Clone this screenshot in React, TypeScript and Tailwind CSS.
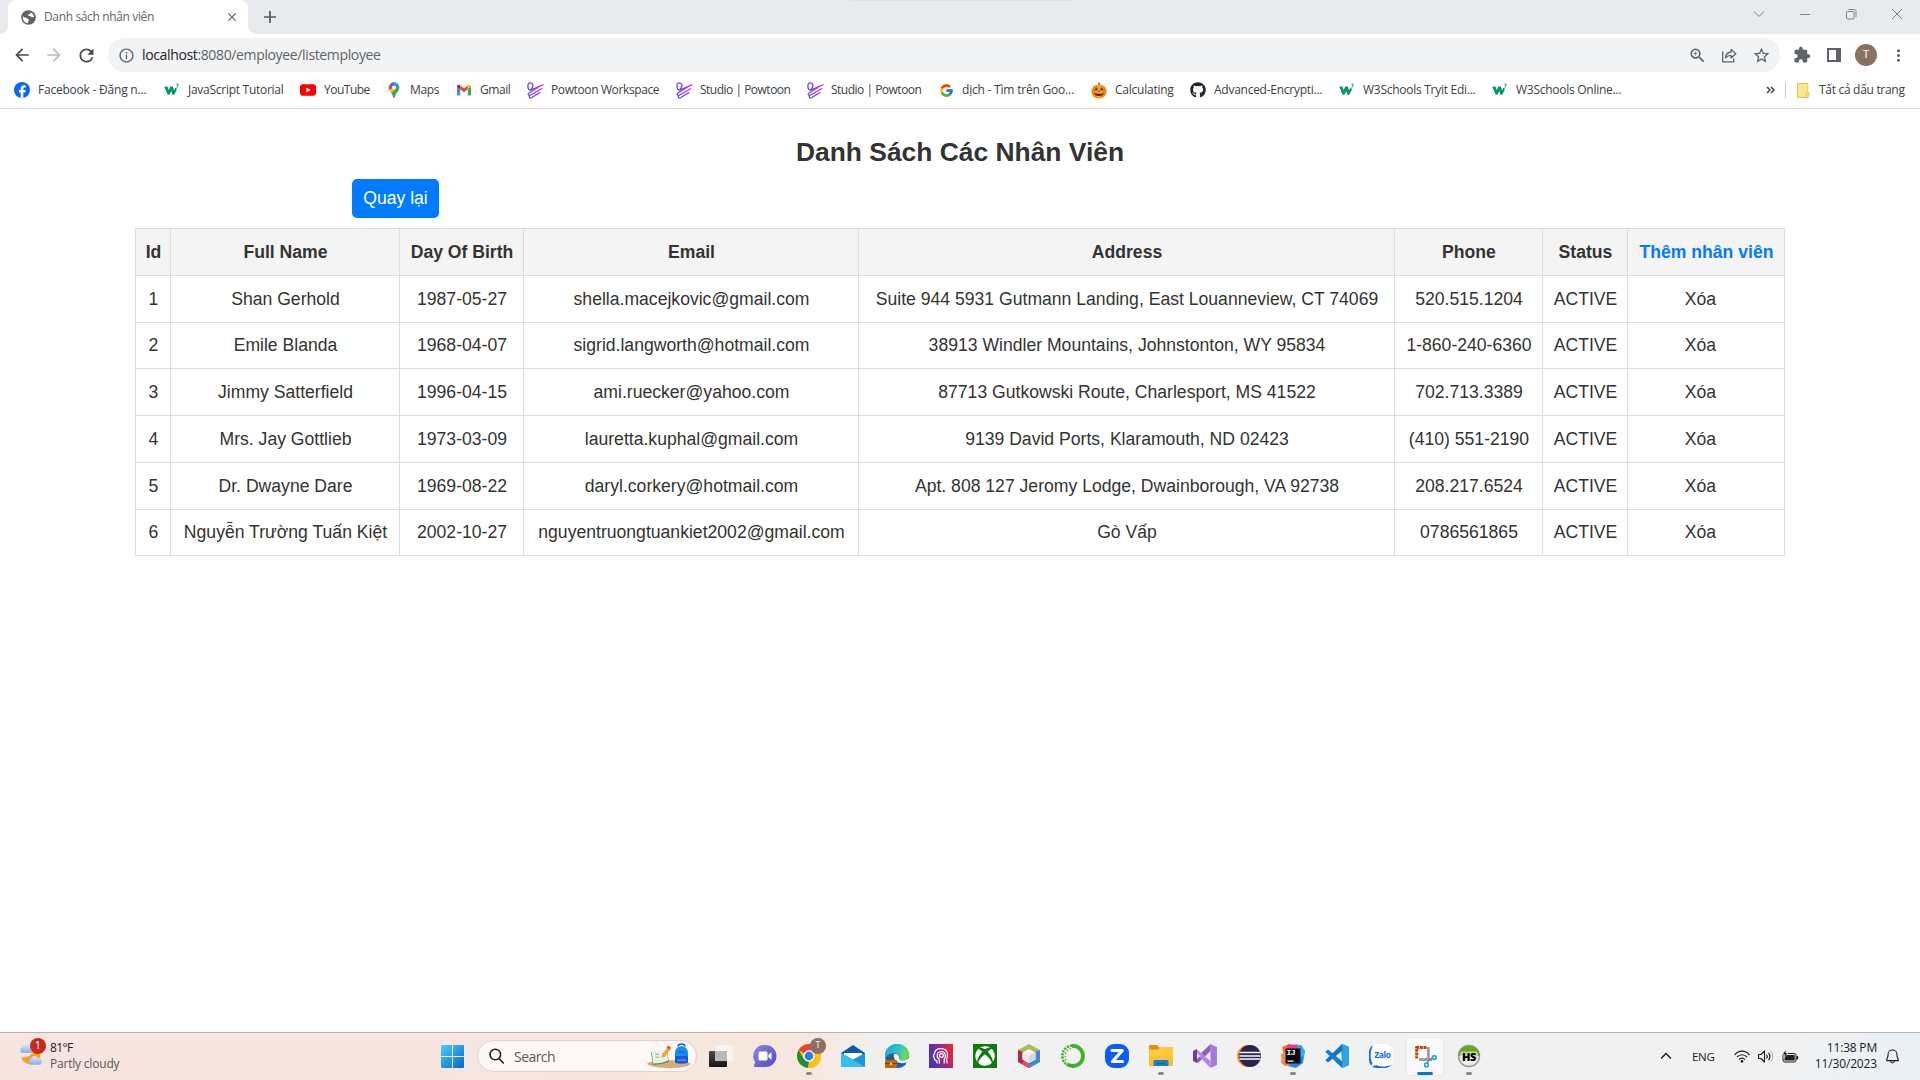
import React from "react";
import { MdArrowBack, MdArrowForward, MdRefresh, MdInfoOutline, MdZoomIn, MdStarBorder, MdExtension, MdMoreVert, MdClose, MdAdd } from "react-icons/md";
import { FaGithub, FaXbox } from "react-icons/fa";
import { FcGoogle } from "react-icons/fc";

const UI = "font-['Open_Sans','Noto_Sans',sans-serif]";

/* ---------- bookmark icons ---------- */
const Facebook = () => (
  <svg width="16" height="16" viewBox="0 0 16 16">
    <circle cx="8" cy="8" r="8" fill="#0866ff" />
    <path d="M6.700 15.900v-5.400H5V8h1.700V6.900c0-2.500 1.100-3.700 3.600-3.700.5 0 1.200.1 1.500.2v2.200h-.8c-1.200 0-1.700.5-1.700 1.700V8h2.400l-.4 2.500H9.300v5.400z" fill="#fff" />
  </svg>
);
const W3 = () => (
  <svg width="17" height="16" viewBox="0 0 17 16">
    <path d="M.3 4.200h3.400L5 8.300l1.600-4.100h2.800l1.200 4L12 6l2 .6-3 6.400H9L7.700 9.300 5.800 13h-2z" fill="#059862" />
    <path d="M13.200 1.600h2l-1.200 1.500c1.700.1 1.400 2.200-.8 1.900" fill="none" stroke="#059862" strokeWidth=".9" />
  </svg>
);
const YouTube = () => (
  <svg width="16" height="16" viewBox="0 0 16 16">
    <rect x="0" y="2.300" width="16" height="11.400" rx="2.600" fill="#f00" />
    <path d="M6.400 5.600v4.800L10.600 8z" fill="#fff" />
  </svg>
);
const Maps = () => (
  <svg width="16" height="16" viewBox="0 0 16 16">
    <path d="M4.200 2.100 8 5.200 3.400 8.300A5.500 5.500 0 0 1 4.200 2.100z" fill="#ea4335" />
    <path d="M4.100 2.200A5.300 5.300 0 0 1 9.700.5L6 5z" fill="#1a73e8" />
    <path d="M9.600.4a5.400 5.400 0 0 1 3.200 2.700L9.900 6.700 6.300 4z" fill="#4285f4" />
    <path d="M12.700 2.900c1 2 .8 4-.3 5.700-1.500 2.200-3 3.500-3.400 6.400-.2 1-1.800 1-2 0-.3-1.800-.9-3-2-4.600z" fill="#34a853" />
    <path d="m3.200 8.200 6.500-2.300-4.300 5.700C4.700 10.600 3.900 9.500 3.200 8.200z" fill="#fbbc04" />
    <circle cx="8" cy="5.500" r="1.900" fill="#fff" />
  </svg>
);
const Gmail = () => (
  <svg width="16" height="16" viewBox="0 0 16 16">
    <path d="M1 4.500v8.100c0 .5.400.9.900.9h2.300V7z" fill="#4285f4" />
    <path d="M15 4.500v8.100c0 .5-.4.900-.9.900h-2.300V7z" fill="#34a853" />
    <path d="M4.200 3.500 8 6.500l3.800-3v3.700L8 10.200 4.200 7.200z" fill="#ea4335" />
    <path d="M1 4.300C1 2.800 2.500 2.300 3.500 3l.7.500v3.700L1 4.900z" fill="#c5221f" />
    <path d="M15 4.300c0-1.500-1.500-2-2.500-1.300l-.7.500v3.700L15 4.900z" fill="#fbbc04" />
  </svg>
);
const Powtoon = () => (
  <svg className="shrink-0" width="17" height="17" viewBox="0 0 17 17" fill="none" strokeWidth="1.300" strokeLinecap="round" strokeLinejoin="round">
    <defs>
      <linearGradient id="pow" gradientUnits="userSpaceOnUse" x1="1" y1="0" x2="16" y2="0">
        <stop offset="0" stopColor="#4a4dea" />
        <stop offset="1" stopColor="#d62be8" />
      </linearGradient>
    </defs>
    <path d="M16 2.800 4.200 7.800C2.200 8.600.8 7 .9 3.800.9.800 3 .2 4.900 1.500c1.600 1.100 1.600 3.200-.6 5.200" stroke="url(#pow)" />
    <path d="M14.800 6.800 3.200 13.200C1.600 14 .4 12 2 11L11 5.500" stroke="url(#pow)" />
    <path d="M12.800 10.600 4.500 15.800c-1.500.8-2.600-.5-2-1.800" stroke="url(#pow)" />
  </svg>
);
const Pumpkin = () => (
  <svg width="16" height="17" viewBox="0 0 16 17">
    <path d="M7 3.800 7.300.4l1.700.2-.3 3.300z" fill="#4f7f2a" />
    <ellipse cx="8" cy="9.500" rx="7.600" ry="7" fill="#f28412" />
    <ellipse cx="8" cy="9.500" rx="3.500" ry="7" fill="#fa9e25" />
    <path d="m3.500 8.300 2-3 1.500 3zM9 8.300l1.500-3 2 3zM7 10l1-1.200L9 10zM3 11l1.800.8 1-.6 1.200 1 1-.8 1 .8 1.200-1 1 .6L13 11c-.8 4-9.200 4-10 0z" fill="#53260c" />
  </svg>
);
const GoogleIcon = () => <FcGoogle size={15} />;
const Octocat = () => <FaGithub size={16} color="#24292f" />;

const bookmarks = [
  { Icon: Facebook, label: "Facebook - Đăng n...", w: "w-[150px]", t: "tracking-[-0.22px]" },
  { Icon: W3, label: "JavaScript Tutorial", w: "w-[136px]", t: "tracking-[-0.27px]" },
  { Icon: YouTube, label: "YouTube", w: "w-[86px]", t: "tracking-[-0.5px]" },
  { Icon: Maps, label: "Maps", w: "w-[70px]", t: "tracking-[-0.34px]" },
  { Icon: Gmail, label: "Gmail", w: "w-[71px]", t: "tracking-[-0.44px]" },
  { Icon: Powtoon, label: "Powtoon Workspace", w: "w-[149px]", t: "tracking-[-0.38px]" },
  { Icon: Powtoon, label: "Studio | Powtoon", w: "w-[131px]", t: "tracking-[-0.5px]" },
  { Icon: Powtoon, label: "Studio | Powtoon", w: "w-[131px]", t: "tracking-[-0.5px]" },
  { Icon: GoogleIcon, label: "dịch - Tìm trên Goo...", w: "w-[153px]", t: "tracking-[-0.21px]" },
  { Icon: Pumpkin, label: "Calculating", w: "w-[99px]", t: "tracking-[-0.24px]" },
  { Icon: Octocat, label: "Advanced-Encrypti...", w: "w-[149px]", t: "tracking-[-0.26px]" },
  { Icon: W3, label: "W3Schools Tryit Edi...", w: "w-[153px]", t: "tracking-[-0.27px]" },
  { Icon: W3, label: "W3Schools Online...", w: "w-[140px]", t: "tracking-[-0.27px]" },
];

/* ---------- browser chrome ---------- */
const Globe = () => (
  <svg className="shrink-0" width="15" height="15" viewBox="0 0 15 15">
    <circle cx="7.500" cy="7.500" r="7.300" fill="#5f6368" />
    <path d="M2 6.200c1.200 1.200 2.200 1.500 3.400 1.600 1 .2.800 1.200 1.800 1.500.9.200 1 1 .4 1.700-.5.600-.4 1.600-1.100 2.200C3.400 12.700 1.300 9.500 2 6.200zM9.500 2.300c.3 1.300-.5 1.800-1.500 2-.9.200-.6 1.200-1.500 1.500 1 .2 2.500 0 3.300.8.800.9 1.800.7 3.200.5-.2-2-1.500-4-3.500-4.800z" fill="#fff" />
  </svg>
);

function TabStrip() {
  return (
    <div className="relative flex h-[34px] bg-[#e8eaed]">
      <div className="absolute left-[850px] top-0 h-px w-[222px] rounded-b bg-[#dfe1e6]" />
      <div className="flex w-2 items-end bg-white"><div className="h-full w-2 rounded-br-lg bg-[#e8eaed]" /></div>
      <div className="flex w-[240px] items-center bg-[#e8eaed]">
        <div className="flex h-full w-full items-center rounded-t-lg bg-white pl-[13px] pr-[9px]">
          <Globe />
          <span className="ml-[8px] grow whitespace-nowrap text-[12px] tracking-[-0.36px] text-[#5f6368]">Danh sách nhân viên</span>
          <MdClose size={14} color="#5f6368" />
        </div>
      </div>
      <div className="w-2 bg-white"><div className="h-full w-2 rounded-bl-lg bg-[#e8eaed]" /></div>
      <div className="flex w-[28px] items-center justify-center"><svg width="12" height="12" viewBox="0 0 12 12"><path d="M6 0v12M0 6h12" stroke="#53565a" strokeWidth="1.700" /></svg></div>
      <div className="grow" />
      <div className="flex h-[28px] w-[184px] text-[#808184]">
        <svg className="h-7 w-[46px]" viewBox="0 0 46 28" fill="none" stroke="currentColor"><path d="m18 11.500 5 5 5-5" /></svg>
        <svg className="h-7 w-[46px]" viewBox="0 0 46 28" fill="none" stroke="currentColor"><path d="M18 14.500h10" /></svg>
        <svg className="h-7 w-[46px]" viewBox="0 0 46 28" fill="none" stroke="currentColor"><rect x="18.500" y="11.500" width="7.500" height="7.500" rx="1" /><path d="M20.500 9.500H26c1.200 0 2 .8 2 2V17" /></svg>
        <svg className="h-7 w-[46px]" viewBox="0 0 46 28" fill="none" stroke="currentColor"><path d="m18 9 10 10M28 9 18 19" /></svg>
      </div>
    </div>
  );
}

function Toolbar() {
  return (
    <div className="flex h-[42px] items-center pl-[12px] text-[#5f6368]">
      <MdArrowBack size={20} color="#46494d" />
      <MdArrowForward size={20} className="ml-[12px]" color="#b9bbbd" />
      <MdRefresh size={21} className="ml-[12px]" color="#46494d" />
      <div className="ml-[11px] flex h-[34px] w-[1672px] items-center rounded-full bg-[#f1f3f4] pl-[10px] pr-[9px]">
        <MdInfoOutline size={17} />
        <span className="mb-px ml-[7px] grow whitespace-nowrap text-[14px] tracking-[-0.36px] text-[#5f6368]"><span className="text-[#202124]">localhost</span>:8080/employee/listemployee</span>
        <MdZoomIn size={19} />
        <svg className="ml-[14px]" width="17" height="17" viewBox="0 0 17 17" fill="none" stroke="currentColor" strokeWidth="1.300">
          <path d="M1.700 4.500v10.300h11v-3.300" />
          <path d="M4.500 10.800c.4-3.600 2.300-5.500 5.600-5.800V2.400l4.700 4.400-4.700 4.300V8.400c-2.500 0-4.300.8-5.600 2.400z" strokeLinejoin="round" />
        </svg>
        <MdStarBorder size={19} className="ml-[14px]" />
      </div>
      <MdExtension size={18} className="ml-[13px]" />
      <svg className="ml-[16px]" width="14" height="14" viewBox="0 0 14 14"><path fillRule="evenodd" d="M0 0h14v14H0zM2 2v10h7V2z" fill="#5f6368" /></svg>
      <div className="ml-[14px] flex h-[22px] w-[22px] items-center justify-center rounded-full bg-[#8d6e63] font-['Roboto',sans-serif] text-[11px] text-white">T</div>
      <MdMoreVert size={19} className="ml-[12px]" />
    </div>
  );
}

function Bookmarks() {
  return (
    <div className="flex h-[33px] items-start border-b border-[#d5d7da] pl-[14px] text-[12px] text-[#3c4043]">
      {bookmarks.map(({ Icon, label, w, t }, i) => (
        <div key={i} className={`flex h-[28px] shrink-0 items-center ${w}`}>
          <span className="flex w-4 shrink-0 justify-center"><Icon /></span>
          <span className={`ml-2 whitespace-nowrap ${t}`}>{label}</span>
        </div>
      ))}
      <div className="grow" />
      <div className="flex h-[28px] w-[154px] shrink-0 items-center">
        <svg width="10" height="8" viewBox="0 0 10 8" fill="none" stroke="#46494d" strokeWidth="1.500"><path d="m1 1 3 3-3 3M5 1l3 3-3 3" /></svg>
        <div className="ml-[9px] h-4 w-px bg-[#c8cacd]" />
        <svg className="ml-[11px]" width="13" height="15" viewBox="0 0 13 15"><path d="M.5.5h10.300v9l1.200.3v3.700l-1 1H.5z" fill="#ffe694" stroke="#e8c34a" /><path d="M9.500 14v-3.500h1.300" fill="none" stroke="#e8c34a" /></svg>
        <span className="ml-[9px] whitespace-nowrap tracking-[-0.3px]">Tất cả dấu trang</span>
      </div>
    </div>
  );
}

/* ---------- page ---------- */
const rows = [
  ["1", "Shan Gerhold", "1987-05-27", "shella.macejkovic@gmail.com", "Suite 944 5931 Gutmann Landing, East Louanneview, CT 74069", "520.515.1204", "ACTIVE", "Xóa"],
  ["2", "Emile Blanda", "1968-04-07", "sigrid.langworth@hotmail.com", "38913 Windler Mountains, Johnstonton, WY 95834", "1-860-240-6360", "ACTIVE", "Xóa"],
  ["3", "Jimmy Satterfield", "1996-04-15", "ami.ruecker@yahoo.com", "87713 Gutkowski Route, Charlesport, MS 41522", "702.713.3389", "ACTIVE", "Xóa"],
  ["4", "Mrs. Jay Gottlieb", "1973-03-09", "lauretta.kuphal@gmail.com", "9139 David Ports, Klaramouth, ND 02423", "(410) 551-2190", "ACTIVE", "Xóa"],
  ["5", "Dr. Dwayne Dare", "1969-08-22", "daryl.corkery@hotmail.com", "Apt. 808 127 Jeromy Lodge, Dwainborough, VA 92738", "208.217.6524", "ACTIVE", "Xóa"],
  ["6", "Nguyễn Trường Tuấn Kiệt", "2002-10-27", "nguyentruongtuankiet2002@gmail.com", "Gò Vấp", "0786561865", "ACTIVE", "Xóa"],
];
const heads = ["Id", "Full Name", "Day Of Birth", "Email", "Address", "Phone", "Status", "Thêm nhân viên"];
const cols = ["w-[35px]", "w-[229px]", "w-[124px]", "w-[335px]", "w-[536px]", "w-[148px]", "w-[85px]", "w-[157px]"];
const heights = ["h-[47px]", "h-[46px]", "h-[47px]", "h-[47px]", "h-[47px]", "h-[46px]"];

function EmployeePage() {
  return (
    <main className="h-[923px] overflow-hidden bg-white font-['Liberation_Sans',Arial,sans-serif] text-[#333]">
      <h2 className="mt-[27px] text-center text-[26.4px] font-bold leading-[32px]">Danh Sách Các Nhân Viên</h2>
      <div className="ml-[352px] mt-[11px] flex h-[39px] w-[87px] items-center justify-center rounded-[5px] bg-[#007bff] pb-px text-[17.6px] text-white">Quay lại</div>
      <table className="ml-[135px] mt-[10px] w-[1650px] table-fixed border-collapse text-center text-[17.6px] leading-6">
        <colgroup>{cols.map((c, i) => <col key={i} className={c} />)}</colgroup>
        <thead>
          <tr className="h-[47px] bg-[#f4f4f4]">
            {heads.map((h, i) => (
              <th key={h} className={`whitespace-nowrap border border-[#ddd] py-0 pl-px pr-0 font-bold ${i === 7 ? "text-[#007bff]" : ""}`}>{h}</th>
            ))}
          </tr>
        </thead>
        <tbody>
          {rows.map((r, ri) => (
            <tr key={r[0]} className={heights[ri]}>
              {r.map((c, i) => (
                <td key={i} className={`whitespace-nowrap border border-[#ddd] pl-px pt-0 ${i === 7 ? "pr-[12px]" : "pr-0"} ${ri === 1 || ri === 5 ? "pb-[2px]" : "pb-0"}`}>{c}</td>
              ))}
            </tr>
          ))}
        </tbody>
      </table>
    </main>
  );
}

/* ---------- taskbar icons ---------- */
type P = { children: React.ReactNode };
const S = ({ children }: P) => <svg width="24" height="24" viewBox="0 0 24 24">{children}</svg>;

const TaskView = () => (
  <S>
    <defs><linearGradient id="tv" x1="0" y1="0" x2="0" y2="1"><stop stopColor="#4a4a4a" /><stop offset="1" stopColor="#161616" /></linearGradient></defs>
    <rect x="0" y="7" width="18" height="16" rx="1" fill="url(#tv)" />
    <rect x="6" y="1" width="18" height="16" rx="1" fill="#f7f7f7" opacity=".88" />
    <rect x="6" y="7" width="12" height="10" fill="#b9b9b9" />
  </S>
);
const Chat = () => (
  <S>
    <defs><linearGradient id="ch" x1="0" y1="0" x2="1" y2="1"><stop stopColor="#8f86dd" /><stop offset="1" stopColor="#4a4cc0" /></linearGradient></defs>
    <path d="M12.500 1A11 11 0 0 1 12.500 23H2.500C1 23 .8 22 1.100 21l1-3A11 11 0 0 1 12.500 1z" fill="url(#ch)" />
    <rect x="5.500" y="7.500" width="9" height="9" rx="1.500" fill="#fff" /><path d="m15.300 11 3.200-2.700v7.500L15.300 13z" fill="#fff" />
  </S>
);
const Chrome = () => (
  <div className="relative h-6 w-6">
    <S>
      <circle cx="12" cy="12" r="12" fill="#fbc116" />
      <path d="M12 12 1.600 6A12 12 0 0 1 22.400 6z" fill="#ea4335" />
      <path d="M1.600 6 6.800 15 12 18v0l-1.300 5.900A12 12 0 0 1 1.600 6z" fill="#1e8e3e" />
      <path d="M12 6.500h10.700A12 12 0 0 1 11 24l5-9z" fill="#fbc116" />
      <circle cx="12" cy="12" r="5.700" fill="#fff" /><circle cx="12" cy="12" r="4.400" fill="#2f7ded" />
    </S>
    <div className="absolute -top-[6px] left-[13px] flex h-4 w-4 items-center justify-center rounded-full bg-[#8d6e63] font-['Roboto'] text-[9px] text-[#eee]">T</div>
  </div>
);
const Mail = () => (
  <S>
    <path d="M0 9 12 1l12 8v5H0z" fill="#0a5ba8" /><path d="M3 9h18v8H3z" fill="#fff" />
    <path d="M0 9v14h24V9l-12 6.500z" fill="#1c93dc" /><path d="M0 9v14h24z" fill="#35bdf2" />
  </S>
);
const Edge = () => (
  <S>
    <defs>
      <linearGradient id="e1" x1="0" y1="0" x2="1" y2=".4"><stop stopColor="#1b9de2" /><stop offset=".6" stopColor="#2fc7c8" /><stop offset="1" stopColor="#6edb4b" /></linearGradient>
    </defs>
    <circle cx="12" cy="12" r="12" fill="#0f62b5" />
    <path d="M0 11C1 4 6 0 12 0c7 0 12 5 12 10.500 0 4-3.300 6-6.500 6-3 0-4.200-1.200-3.500-2.300 1.500-2.200 0-5.200-3.500-5.200C6 9 1.500 11 0 15z" fill="url(#e1)" />
    <path d="M9 10c3-1 6 1.500 5 4.200-.7 1.100.5 2.300 3.500 2.300 2 0 4-.6 6.500-2.500V18l-2 2c-4-1-10-.500-12.500-4C8.500 14 8 11.500 9 10z" fill="#f1f1f1" />
    <path d="M9 10c-1 2-.5 4.500 1 6.500 2.500 3.500 7.500 4 12 1.800C19 24 13 24.500 8 22l-2-8z" fill="#0f62b5" />
    <rect x="4" y="14" width="5" height="3" fill="none" stroke="#7a3f08" /><rect x="0" y="16" width="12" height="8" rx="1" fill="#b66a12" /><path d="M0 19h12v1H0z" fill="#7a3f08" /><rect x="5" y="18.500" width="2" height="2.500" fill="#ffd257" />
  </S>
);
const HeadApp = () => (
  <S>
    <defs><linearGradient id="ha" x1="0" y1=".6" x2="1" y2=".3"><stop stopColor="#3b35c4" /><stop offset=".5" stopColor="#8a2a86" /><stop offset="1" stopColor="#f2242d" /></linearGradient></defs>
    <rect width="24" height="24" fill="url(#ha)" />
    <g fill="none" stroke="#fff" strokeWidth="1.200" strokeLinejoin="round">
      <path d="M8 19.500v-2.700C5.500 16.500 5 15 5.200 13L4.200 12.300 5.500 9.500C6.300 3 17.700 3 18.500 10c.2 3-.5 4.500-1 5.500l.7 4" />
      <path d="M10.300 19.500v-4.300C7.500 14 7 8 12 7.500c4.500 0 5.500 5 3.200 7.500v4.500" />
      <circle cx="12.400" cy="11.500" r="1.900" />
    </g>
  </S>
);
const Xbox = () => (
  <div className="flex h-6 w-6 items-center justify-center bg-[#107c10]"><FaXbox size={20} color="#fff" /></div>
);
const NetBeans = () => (
  <S>
    <path d="M12 0 23 6v12l-11 6L1 18V6z" fill="#a6bf57" />
    <path d="M1 6v12l11 6v-5l-6-4V8z" fill="#ae2b4d" /><path d="M5 20.200 12 24v-5l-5-3z" fill="#dd4f70" /><path d="M23 6v12l-11 6v-5l6-4V8z" fill="#4388cb" />
    <path d="m12 5 6.500 3.500v7L12 19l-6.500-3.500v-7z" fill="#f4f4f4" /><path d="M12 12v7l6.500-3.500v-7z" fill="#d5d7d9" /><path d="M5.500 8.500 12 12v7l-6.500-3.500z" fill="#e8e9ea" />
  </S>
);
const Anaconda = () => (
  <S>
    <path d="M11 2A10 10 0 1 1 6 20" fill="none" stroke="#43b02a" strokeWidth="3.800" />
    <path d="M11 1.500A10.500 10.500 0 0 0 5 20" fill="none" stroke="#43b02a" strokeWidth="2.600" strokeDasharray="2.200 1" />
    <path d="M10 4.500A8 8 0 0 0 6 17.500" fill="none" stroke="#43b02a" strokeWidth="1.300" strokeDasharray="1.500 1.800" />
  </S>
);
const ZApp = () => (
  <S>
    <rect width="24" height="24" rx="9" fill="#0b5cff" />
    <path d="M7 6.500h10.300L7.500 17.500H17.500" fill="none" stroke="#fff" strokeWidth="3.200" strokeLinejoin="round" strokeLinecap="round" />
  </S>
);
const Explorer = () => (
  <S>
    <path d="M0 2.500C0 1.700.7 1 1.500 1H8l2.500 2.500H24V9H0z" fill="#d99408" />
    <path d="M0 5.500h8.500L11 3.500h13V22H0z" fill="#fdcb3c" /><path d="M0 12h24v10H0z" fill="#f8bd2a" opacity=".6" />
    <path d="M4.500 22v-4.500c0-1 .8-1.500 1.500-1.500h12c1 0 1.500.7 1.500 1.500V22z" fill="#1583d0" /><path d="M8 19h8v1.300H8z" fill="#0b5a9e" />
  </S>
);
const VisualStudio = () => (
  <S>
    <path d="M17.500 0 24 3v18l-6.500 3z" fill="#a879d8" /><path d="M17.500 0v7L5 19l-4.500-2.500z" fill="#865fc5" /><path d="M17.500 24v-7L4 5.500.5 7z" fill="#b78ae0" />
    <path d="m0 7 4-2v14l-4-2z" fill="#68409c" /><path d="m4 9 3 3-3 3z" fill="#efefef" />
  </S>
);
const Eclipse = () => (
  <S>
    <circle cx="11" cy="12" r="11" fill="#f7941e" /><circle cx="13" cy="12" r="11" fill="#2c2255" />
    <path d="M2.500 8.500h21M2.500 12h21M2.500 15h21" stroke="#fff" strokeWidth="1.400" />
  </S>
);
const IntelliJ = () => (
  <div className="relative h-6 w-6">
    <S>
      <path d="M1 3 8 0l6 3-4 18-6 1-4-4 3-6z" fill="#fb6b35" /><path d="m8 0 6 2 6-1 4 6-2 12-7 5-8-2z" fill="#1e88f7" />
      <path d="M7 1 16 .5 22 9l-5 2L4 9z" fill="#fb2f86" /><path d="m0 10 6-2 2 14-7-2z" fill="#fc8a35" /><path d="m16 0 7 6v7l-6-2z" fill="#26b5ed" /><rect x="4.500" y="4.500" width="15" height="15" fill="#090909" /><path d="M6.500 16.500h6v1.200h-6z" fill="#fff" />
    </S>
    <span className="absolute left-[5.500px] top-[4px] font-['Liberation_Mono',monospace] text-[8px] font-bold leading-[9px] tracking-[-0.6px] text-white">IJ</span>
  </div>
);
const VSCode = () => (
  <S>
    <path d="M17.500 0 24 2.800v18.400L17.500 24 16 6z" fill="#2da3e8" />
    <path d="M17.500 0v6.500L3 18.500.3 16.200 16.500.6z" fill="#1176bd" /><path d="M17.500 24v-6.500L3 5.500.3 7.800l16.200 15.600z" fill="#0f80cc" />
  </S>
);
const Zalo = () => (
  <div className="relative flex h-6 w-6 items-center justify-center overflow-hidden rounded-[8px] bg-white">
    <svg className="absolute inset-0" width="24" height="24" viewBox="0 0 24 24"><path d="M4 1.500C1 7 1 15 3.500 19.500L2 22c2 .3 4-.3 5-1 5 2.500 11 2 16-.5-1 2-3 3.500-6 3.500H6c-4 0-6-2-6-6V6c0-2 1.500-4 4-4.500z" fill="#1468ee" /></svg>
    <span className="relative ml-[3px] mb-[2px] font-['Open_Sans'] text-[8.500px] font-bold leading-none tracking-[-0.4px] text-[#0a68ff]">Zalo</span>
  </div>
);
const Snip = () => (
  <S>
    <path d="M0 3h16v16H0z" fill="#fff" />
    <path d="M15.300 3v11.500M6 15.500h13" fill="none" stroke="#9a9fa3" strokeWidth="2.800" />
    <path d="M13.500 3.500H3.700v11" fill="none" stroke="#d4380d" strokeWidth="3" strokeDasharray="3 .7" />
    <path d="m14 19 2-3 3.500-2" stroke="#7d8388" fill="none" strokeWidth="1.600" />
    <circle cx="21.300" cy="13.600" r="1.900" fill="#fff" stroke="#169ddb" strokeWidth="1.500" /><circle cx="13.500" cy="20.900" r="1.900" fill="#fff" stroke="#169ddb" strokeWidth="1.500" />
  </S>
);
const HeidiSql = () => (
  <div className="relative flex h-6 w-6 items-center justify-center">
    <svg className="absolute inset-0" width="24" height="24" viewBox="0 0 24 24"><circle cx="12" cy="12" r="10.500" fill="#ececec" stroke="#9a9a9a" strokeWidth="1.500" /><path d="M1.500 12a10.500 10.500 0 0 1 21 0z" fill="#64a81d" /><rect x="3" y="7.500" width="18" height="9" rx="3" fill="#dfe6d6" opacity=".75" /></svg>
    <span className="relative font-['Open_Sans'] text-[11px] font-extrabold leading-none tracking-[-0.3px] text-black">HS</span>
  </div>
);

const apps = [
  { I: TaskView }, { I: Chat }, { I: Chrome, run: true }, { I: Mail }, { I: Edge }, { I: HeadApp }, { I: Xbox }, { I: NetBeans }, { I: Anaconda }, { I: ZApp },
  { I: Explorer, run: true }, { I: VisualStudio }, { I: Eclipse }, { I: IntelliJ, run: true }, { I: VSCode }, { I: Zalo }, { I: Snip, active: true }, { I: HeidiSql, run: true },
] as { I: React.FC; run?: boolean; active?: boolean }[];

function Taskbar() {
  return (
    <footer className="flex h-[48px] items-center border-t border-[#b9b4b3] bg-[linear-gradient(90deg,#f6e4e0_0%,#f7e5e1_25%,#f6e6de_34%,#f5e8df_42%,#f1f0ef_46%,#f1f1f1_50%,#f1f1f1_92%,#e9f0f6_100%)] text-[12px]">
      <div className="relative ml-[18px] h-[34px] w-[32px] shrink-0">
        <svg className="absolute left-0 top-[2px]" width="27" height="27" viewBox="0 0 28 28">
          <defs><linearGradient id="cl" x1="0" y1="0" x2="0" y2="1"><stop stopColor="#dcebfc" /><stop offset="1" stopColor="#86aeea" /></linearGradient></defs>
          <path d="M3 16c8 1 13-3 14-11 5 3 8 8 5 13-4 7-15 7-19-2z" fill="#f5a11c" />
          <path d="M4 11.500a3.500 3.500 0 0 1 0-6A5 5 0 0 1 13 4c3 1 4 5 1 7.500z" fill="url(#cl)" />
          <path d="M13 23.500a3.300 3.300 0 0 1 0-6 4.500 4.500 0 0 1 8-1c4 0 5 5 2 7z" fill="url(#cl)" />
        </svg>
        <div className="absolute left-[12px] top-[-2px] flex h-4 w-4 items-center justify-center rounded-full bg-[#c42b1c] text-[11px] text-white">1</div>
      </div>
      <div className="mb-[1px] w-[380px] leading-4 text-[#202020]"><div className="tracking-[-0.6px]">81°F</div><div className="tracking-[-0.2px] text-[#5c5654]">Partly cloudy</div></div>
      <svg className="ml-[11px] shrink-0" width="23" height="23" viewBox="0 0 23 23">
        <defs><linearGradient id="win" x1="0" y1="0" x2="1" y2="1"><stop stopColor="#4ccdfb" /><stop offset="1" stopColor="#0268c8" /></linearGradient></defs>
        <path d="M0 1q0-1 1-1h10v11H0zM12 0h10q1 0 1 1v10H12zM0 12h11v11H1q-1 0-1-1zM12 12h11v10q0 1-1 1H12z" fill="url(#win)" />
      </svg>
      <div className="mb-px ml-[13px] flex h-[32px] w-[220px] shrink-0 items-center rounded-full border border-[#e3d0ca] bg-[#fdf7f5] pl-[11px] pr-[4px]">
        <svg width="15" height="16" viewBox="0 0 15 16" fill="none" stroke="#222" strokeWidth="1.600"><circle cx="6.300" cy="6.500" r="5.300" /><path d="m10 10.500 4.300 4.500" strokeLinecap="round" /></svg>
        <span className="ml-[10px] grow text-[14px] tracking-[-0.55px] text-[#5d5957]">Search</span>
        <svg width="45" height="26" viewBox="0 0 45 26">
          <path d="M0 21c3-5 39-5 44 0-4 5.500-38 5.500-44 0z" fill="#d9ab76" />
          <path d="m4 9 9 1 7-2 2 11-8 2-8 1z" fill="#459a4e" /><path d="m4.500 7.500 8.500 1 6.500-2 1.800 11-7.500 2.500-7.500.5z" fill="#e9f1ea" /><path d="m8 11 4 .5M8.500 14l4 .3M15 11l3-1M15.500 14l3-1" stroke="#91ad96" />
          <path d="m15 12 5-7 3 2-5 6.500-3.500 1z" fill="#f6a623" /><path d="m19.500 5 1.500-2.500 3 2L23 7z" fill="#f14b3b" />
          <path d="M31 3.500C31 0 38 0 38 3.500" fill="none" stroke="#1466c2" strokeWidth="1.500" /><path d="M28 10c0-9 13-9 13 0v9c0 2-13 2-13 0z" fill="#1390f2" /><path d="M28 13h13v6c0 2-13 2-13 0z" fill="#0b63d0" /><path d="M30 17h9" stroke="#a16cf2" strokeWidth="1.500" /><path d="M31.500 9h6" stroke="#0b4fa8" />
        </svg>
      </div>
      <div className="ml-[2px] flex h-full shrink-0">
        {apps.map(({ I, run, active }, i) => (
          <div key={i} className="relative flex h-full w-11 items-center justify-center">
            {active && <div className="absolute left-[3px] top-[4px] h-[39px] w-[38px] rounded border border-[#e8e8e8] bg-[#f9f9f9]" />}
            <div className="relative mb-px"><I /></div>
            {run && <div className="absolute left-[19px] top-[39px] h-[3px] w-[6px] rounded-full bg-[#8a8a8a]" />}
            {active && <div className="absolute left-[14px] top-[39px] h-[3px] w-4 rounded-full bg-[#0078d4]" />}
          </div>
        ))}
      </div>
      <div className="grow" />
      <div className="flex h-full w-[260px] shrink-0 items-center pb-px text-[#1c1c1c]">
        <svg width="12" height="8" viewBox="0 0 12 8" fill="none" stroke="currentColor" strokeWidth="1.400"><path d="m1 6.500 5-5 5 5" /></svg>
        <span className="ml-[20px] mt-px w-[24px] text-[11.500px] tracking-[-0.3px]">ENG</span>
        <svg className="ml-[18px]" width="16" height="13" viewBox="0 0 16 13" fill="none" stroke="currentColor" strokeWidth="1.200"><path d="M.6 4.800c4.200-4.800 10.600-4.800 14.800 0M2.900 7.200c3-3.300 7.200-3.300 10.200 0M5.100 9.600c1.700-1.900 4.100-1.900 5.800 0" /><circle cx="8" cy="11.400" r="1.300" fill="currentColor" stroke="none" /></svg>
        <svg className="ml-[8px]" width="16" height="13" viewBox="0 0 16 13" fill="none" stroke="currentColor" strokeWidth="1.100"><path d="M.6 4.500H3L6.500 1v11L3 8.500H.6z" strokeLinejoin="round" /><path d="M8.500 4.500q1.500 2 0 4M10.500 2.800q2.800 3.700 0 7.400" /><path d="M12.700 1.200q4 5.300 0 10.600" stroke="#b5b5b5" /></svg>
        <svg className="ml-[8px]" width="17" height="13" viewBox="0 0 17 13"><rect x="1" y="3.500" width="13" height="8.500" rx="2" fill="none" stroke="currentColor" /><rect x="2.500" y="5" width="10.200" height="5.500" rx=".5" fill="currentColor" /><path d="M14.500 6h1c1 0 1 3.500 0 3.500h-1z" fill="currentColor" /><path d="M3.500-.3.500 4.500h2L2 8l4-5H4z" fill="currentColor" stroke="#f1f1f1" strokeWidth=".6" /></svg>
        <div className="w-[78px] text-right leading-4"><div className="tracking-[-0.2px]">11:38 PM</div><div className="tracking-[-0.15px]">11/30/2023</div></div>
        <svg className="ml-[9px]" width="13" height="15" viewBox="0 0 13 15" fill="none" stroke="currentColor" strokeWidth="1.100"><path d="M2 7V5.500a4.500 4.500 0 0 1 9 0V7l1.300 3.800v.8H.7v-.8z" strokeLinejoin="round" /><path d="M4.700 12q.3 2 1.800 2t1.800-2" /></svg>
      </div>
    </footer>
  );
}

export default function App() {
  return (
    <div className={`flex h-[1080px] w-[1920px] flex-col overflow-hidden bg-white ${UI}`}>
      <TabStrip />
      <Toolbar />
      <Bookmarks />
      <EmployeePage />
      <Taskbar />
    </div>
  );
}
